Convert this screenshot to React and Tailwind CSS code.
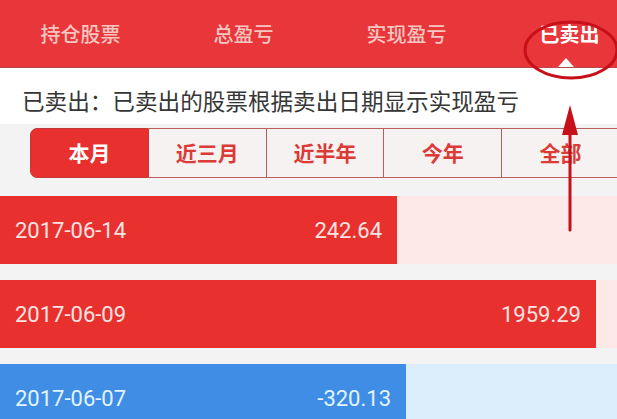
import React from 'react';

const tabs = ['持仓股票', '总盈亏', '实现盈亏', '已卖出'];
const ranges = ['本月', '近三月', '近半年', '今年', '全部'];

const rows = [
  { date: '2017-06-14', value: '242.64', bar: 'w-[397px] bg-[#e8302f] text-[#fde4e1]', track: 'bg-[#fde9e7]' },
  { date: '2017-06-09', value: '1959.29', bar: 'w-[596px] bg-[#e8302f] text-[#fde4e1]', track: 'bg-[#fde9e7]' },
  { date: '2017-06-07', value: '-320.13', bar: 'w-[406px] bg-[#3f8de5] text-[#e2f4ff]', track: 'bg-[#dcedfb]' },
];

function App() {
  return (
    <div
      className="relative w-[617px] h-[419px] overflow-hidden bg-[#f3f3f3] flex flex-col"
      style={{ fontFamily: '"Noto Sans CJK SC", "Noto Sans", sans-serif' }}
    >
      <div className="h-[68px] shrink-0 bg-[#e9363a] border-b border-[#b9474a]">
        <div className="w-[652px] h-full -ml-px flex">
          {tabs.map((t, i) => {
            const active = i === tabs.length - 1;
            return (
              <div key={t} className="relative flex-1 flex items-center justify-center">
                <span
                  className={
                    active
                      ? 'text-[20px] font-bold text-white'
                      : 'text-[20px] font-medium text-[#f7c6c1]'
                  }
                >
                  {t}
                </span>
                {active && (
                  <div className="absolute bottom-0 left-[70px] w-0 h-0 border-l-[8px] border-r-[8px] border-b-[9px] border-l-transparent border-r-transparent border-b-white" />
                )}
              </div>
            );
          })}
        </div>
      </div>

      <div className="h-[56px] shrink-0 bg-white flex items-center pl-[22px] pt-[10px] text-[22.6px] text-[#363636]">
        已卖出：已卖出的股票根据卖出日期显示实现盈亏
      </div>

      <div className="mt-1 ml-[30px] w-[590px] h-[50px] shrink-0 flex">
        {ranges.map((r, i) =>
          i === 0 ? (
            <div
              key={r}
              className="flex-1 flex items-center justify-center rounded-l-[7px] bg-[#e8302f] border border-[#c33a38] text-white text-[21px] font-bold"
            >
              {r}
            </div>
          ) : (
            <div
              key={r}
              className="flex-1 flex items-center justify-center bg-[#f6f2f2] border border-l-0 border-[#b9605c] text-[#dc3a36] text-[21px] font-bold"
            >
              {r}
            </div>
          )
        )}
      </div>

      <div
        className="mt-[18px] flex flex-col gap-4"
        style={{ fontFamily: 'Roboto, "Liberation Sans", sans-serif' }}
      >
        {rows.map((row) => (
          <div key={row.date} className={'h-[68px] flex ' + row.track}>
            <div className={'h-full flex items-center justify-between pl-[15px] pr-[15px] text-[22px] ' + row.bar}>
              <span>{row.date}</span>
              <span>{row.value}</span>
            </div>
          </div>
        ))}
      </div>

      <svg className="absolute inset-0 pointer-events-none" width="617" height="419" viewBox="0 0 617 419">
        <ellipse cx="571" cy="50" rx="46" ry="28" fill="none" stroke="#c8101a" strokeWidth="3" />
        <line x1="570" y1="130" x2="570" y2="230" stroke="#c8101a" strokeWidth="3" strokeLinecap="round" />
        <polygon points="570,105 562,135 578,135" fill="#c8101a" />
      </svg>
    </div>
  );
}

export default App;
